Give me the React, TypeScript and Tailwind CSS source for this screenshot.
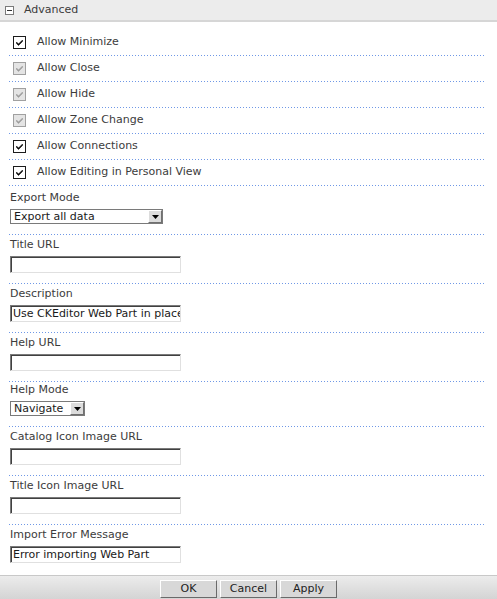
import React from "react";

const font = { fontFamily: '"DejaVu Sans", Verdana, sans-serif' };

const CheckBox: React.FC<{ disabled?: boolean }> = ({ disabled }) => (
  <div
    className={
      "w-[13px] h-[13px] border flex items-center justify-center " +
      (disabled ? "border-[#a0a0a0] bg-[#e4e4e4]" : "border-[#1c1c1c] bg-white")
    }
  >
    <svg width="9" height="9" viewBox="0 0 9 9">
      <path
        d="M1.5 4 L3.5 6 L7.5 2 L7.5 3.5 L3.5 7.5 L1.5 5.5 Z"
        fill={disabled ? "#9a9a9a" : "#000"}
        stroke={disabled ? "#9a9a9a" : "#000"}
        strokeWidth="0.5"
      />
    </svg>
  </div>
);

// blue dotted rule between rows
const Rule = () => (
  <div className="h-[1px] bg-[linear-gradient(to_right,#6f98e6_50%,transparent_50%)] bg-[length:3px_1px]" />
);

const CheckRow: React.FC<{ label: string; disabled?: boolean }> = ({ label, disabled }) => (
  <>
    <div className="h-[25px] flex items-center gap-[11px] pl-[4px]">
      <CheckBox disabled={disabled} />
      <span className="text-[11px] text-[#3c3c3c]">{label}</span>
    </div>
    <Rule />
  </>
);

const TextBox: React.FC<{ value?: string }> = ({ value }) => (
  <div className="w-[171px] h-[17px] border border-t-[#7a7a7a] border-l-[#7a7a7a] border-b-[#e0e0e0] border-r-[#e0e0e0] bg-white overflow-hidden">
    <div className="h-full border-t border-l border-t-[#404040] border-l-[#404040] px-[1px] text-[11px] leading-[14px] text-[#1a1a1a] whitespace-nowrap overflow-hidden">
      {value}
    </div>
  </div>
);

const Select: React.FC<{ value: string; width: string }> = ({ value, width }) => (
  <div className={"h-[15px] flex border border-[#7a7a7a] bg-white " + width}>
    <div className="flex-1 px-[3px] text-[11px] leading-[13px] text-[#1a1a1a]">{value}</div>
    <div className="w-[14px] h-[13px] bg-[#dcdcdc] border border-t-white border-l-white border-b-[#707070] border-r-[#707070] flex items-center justify-center">
      <svg width="7" height="4" viewBox="0 0 7 4">
        <path d="M0 0 H7 L3.5 4 Z" fill="#000" />
      </svg>
    </div>
  </div>
);

const Field: React.FC<{ label: string; pt?: string; last?: boolean; children: React.ReactNode }> = ({
  label,
  pt = "pt-[3px]",
  last,
  children,
}) => (
  <>
    <div className={pt + " pb-[10px]"}>
      <div className="text-[11px] leading-[14px] text-[#3c3c3c] mb-[4px]">{label}</div>
      {children}
    </div>
    {!last && <Rule />}
  </>
);

const Btn: React.FC<{ label: string }> = ({ label }) => (
  <button className="w-[57px] h-[18px] bg-[#d8d8d8] border border-t-white border-l-white border-b-[#6a6a6a] border-r-[#6a6a6a] text-[11px] leading-[14px] text-[#222]">
    {label}
  </button>
);

export default function App() {
  return (
    <div className="w-[497px] h-[599px] bg-white flex flex-col overflow-hidden" style={font}>
      <div className="h-[22px] bg-[#ececec] border-b-2 border-[#d6d6d6] flex items-center pl-[5px] gap-[10px]">
        <div className="w-[9px] h-[9px] border border-[#7a7a7a] bg-white flex items-center justify-center">
          <div className="w-[5px] h-[1px] bg-[#333]" />
        </div>
        <span className="text-[11px] text-[#3c3c3c]">Advanced</span>
      </div>

      <div className="flex-1 pl-[9px] pr-[11px] pt-[8px]">
        <CheckRow label="Allow Minimize" />
        <CheckRow label="Allow Close" disabled />
        <CheckRow label="Allow Hide" disabled />
        <CheckRow label="Allow Zone Change" disabled />
        <CheckRow label="Allow Connections" />
        <CheckRow label="Allow Editing in Personal View" />

        <Field label="Export Mode" pt="pt-[5px] pl-[1px]">
          <Select value="Export all data" width="w-[153px]" />
        </Field>
        <Field label="Title URL" pt="pt-[3px] pl-[1px]">
          <TextBox />
        </Field>
        <Field label="Description" pt="pt-[3px] pl-[1px]">
          <TextBox value="Use CKEditor Web Part in place" />
        </Field>
        <Field label="Help URL" pt="pt-[3px] pl-[1px]">
          <TextBox />
        </Field>
        <Field label="Help Mode" pt="pt-[1px] pl-[1px]">
          <Select value="Navigate" width="w-[75px]" />
        </Field>
        <Field label="Catalog Icon Image URL" pt="pt-[3px] pl-[1px]">
          <TextBox />
        </Field>
        <Field label="Title Icon Image URL" pt="pt-[3px] pl-[1px]">
          <TextBox />
        </Field>
        <Field label="Import Error Message" pt="pt-[3px] pl-[1px]" last>
          <TextBox value="Error importing Web Part" />
        </Field>
      </div>

      <div className="h-[24px] border-t border-[#c8c8c8] bg-gradient-to-b from-[#ececec] to-[#d4d4d4] flex items-center justify-center gap-[3px] pt-[2px]">
        <Btn label="OK" />
        <Btn label="Cancel" />
        <Btn label="Apply" />
      </div>
    </div>
  );
}
